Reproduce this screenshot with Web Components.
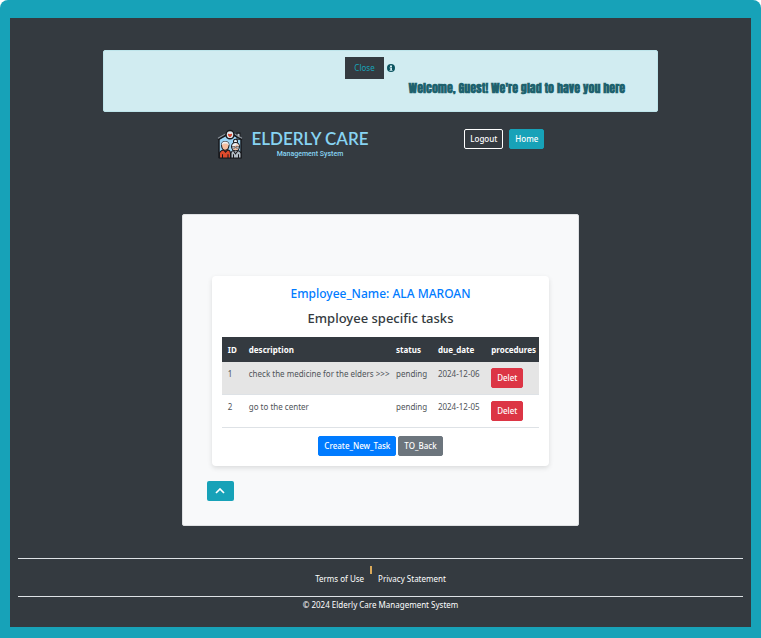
<!DOCTYPE html>
<html lang="en">
<head>
<meta charset="utf-8">
<meta name="viewport" content="width=device-width, initial-scale=1">
<title>Elderly Care Management System</title>
<style>
html { background: #fff; min-height: 100%; }
body { margin: 0; font: 8px/12px "Noto Sans", "Open Sans", sans-serif; color: #343a40; }
</style>
</head>
<body>
<care-page>
  <welcome-alert slot="alert">Welcome, Guest! We're glad to have you here</welcome-alert>
  <site-header slot="header"></site-header>
  <content-panel>
    <task-card employee="ALA MAROAN"></task-card>
  </content-panel>
  <site-footer slot="footer"></site-footer>
</care-page>
<script>
function define(name, html) {
  const template = document.createElement('template');
  template.innerHTML = html;
  customElements.define(name, class extends HTMLElement {
    constructor() {
      super();
      this.attachShadow({ mode: 'open' }).append(template.content.cloneNode(true));
    }
    connectedCallback() {
      if (this.setup) return;
      this.setup = true;
      for (const attr of this.attributes) {
        const target = this.shadowRoot.querySelector('[data-text="' + attr.name + '"]');
        if (target) target.textContent = attr.value;
      }
    }
  });
}

define('care-page', `
<style>
:host { display: flex; box-sizing: border-box; min-height: 100vh; padding: 18px 10px 11px; background: #17a2b8; border-radius: 8px 8px 0 0; }
.sheet { flex: 1; min-width: 0; display: flex; flex-direction: column; align-items: stretch; background: #343a40; padding: 32px 8px 0; }
.alert { margin: 0 11.7%; }
.header { margin: 17px 27.4% 0 27.5%; }
main { margin: 55px 22.6% 32px; }
</style>
<div class="sheet">
  <div class="alert"><slot name="alert"></slot></div>
  <div class="header"><slot name="header"></slot></div>
  <main><slot></slot></main>
  <slot name="footer"></slot>
</div>`);

define('ui-button', `
<style>
:host { display: inline-block; }
button { display: block; box-sizing: border-box; height: 20px; padding: 0 5px; font: inherit; font-weight: 500; white-space: nowrap; color: #fff; background: var(--fill); border: 1px solid var(--edge, var(--fill)); border-radius: 2px; cursor: pointer; }
</style>
<button type="button"><slot></slot></button>`);

define('welcome-alert', `
<style>
:host { display: block; box-sizing: border-box; height: 62px; padding: 6px 32px; background: #d1ecf1; border: 1px solid #bee5eb; border-radius: 2px; color: #0c5460; }
.top { display: flex; justify-content: center; align-items: center; gap: 3px; padding-right: 21px; }
button { box-sizing: border-box; height: 22px; padding: 0 9px; border: 0; font: inherit; color: #17a2b8; background: #343a40; }
svg { display: block; width: 8px; height: 8px; }
p { margin: 0; font: bold 12px/18px Impact, Anton, "Liberation Sans Narrow", "Liberation Sans", sans-serif; text-align: right; white-space: nowrap; opacity: .9; }
</style>
<div class="top"><button type="button">Close</button>
<svg viewBox="0 0 16 16" aria-hidden="true"><circle cx="8" cy="8" r="8" fill="#0c5460"/><path d="M6 3h4v3H6zM5 7h5v5h1v1.500H5V12h1.500V8.500H5z" fill="#d1ecf1"/></svg></div>
<p><slot></slot></p>`);

define('site-header', `
<style>
:host { display: flex; justify-content: space-between; align-items: flex-start; gap: 12px; }
.brand { display: flex; align-items: center; gap: 8px; color: #87d3f2; text-align: center; white-space: nowrap; }
svg { width: 26px; height: 30px; flex: none; }
strong { display: block; font: 600 17px/20px Lato, sans-serif; }
small { display: block; font: 500 7px/10px Roboto, sans-serif; }
nav { display: flex; gap: 6px; }
</style>
<div class="brand">
<svg viewBox="0 0 52 58" preserveAspectRatio="none" aria-hidden="true">
<path d="M4 20 26 8l22 12v35H4z" fill="#9bd4f5"/>
<path d="M40 8h6v12h-6z" fill="#c7ccd2" stroke="#17181c" stroke-width="2"/>
<path d="M2 21 26 8l24 13M4 20v35h44V20" fill="none" stroke="#17181c" stroke-width="3"/>
<path d="M2 18 18 9M34 9l16 9" stroke="#8d959c" stroke-width="2"/>
<circle cx="26" cy="11" r="8" fill="#dfe6ea" stroke="#17181c" stroke-width="3"/>
<path d="M26 16c-7-5-4-9 0-6 4-3 7 1 0 6z" fill="#d6422b"/>
<path d="M5 56V46q2-5 9-6h7q6 1 6 7v9z" fill="#df4a2c" stroke="#17181c" stroke-width="2"/>
<path d="m13 40 4 5 5-5M11 49v7M22 49v7" fill="none" stroke="#17181c" stroke-width="2"/>
<path d="M9 32q0-8 7-8 8 0 8 8-1 9-8 9-6 0-7-9z" fill="#f4bfa1" stroke="#17181c" stroke-width="2"/>
<path d="M9 32q0-8 7-8 8 0 8 8l-4-4h-7z" fill="#eef2f5"/>
<path d="M28 56V46q2-5 7-5h5q7 1 8 6v9z" fill="#b3bcc5" stroke="#17181c" stroke-width="2"/>
<path d="m33 42 4 6 5-6M33 49v7M43 49v7" fill="none" stroke="#17181c" stroke-width="2"/>
<circle cx="37" cy="24" r="4" fill="#edf1f5" stroke="#17181c" stroke-width="2"/>
<circle cx="37" cy="34" r="8" fill="#edf1f5" stroke="#17181c" stroke-width="2"/>
<path d="M31 34q7-1 9-5l4 5q-1 7-7 7-5 0-6-7z" fill="#f4bfa1"/>
<path d="M30 34h6v3h-6zM38 34h6v3h-6z" fill="#dce7ef" stroke="#17181c"/>
</svg>
<div><strong>ELDERLY CARE</strong><small>Management System</small></div>
</div>
<nav><ui-button style="--fill:#343a40;--edge:#fff">Logout</ui-button><ui-button style="--fill:#17a2b8">Home</ui-button></nav>`);

define('content-panel', `
<style>
:host { display: block; background: #f8f9fa; border: 1px solid #dfe1e3; border-radius: 2px; padding: 61px 29px 24px; }
button { display: flex; align-items: center; justify-content: center; width: 27px; height: 20px; margin: 15px 0 0 -5px; padding: 0; border: 0; border-radius: 2px; background: #17a2b8; cursor: pointer; }
</style>
<slot></slot>
<button type="button" aria-label="Back to top"><svg width="10" height="6" viewBox="0 0 10 6" aria-hidden="true"><path d="m1 5 4-4 4 4" fill="none" stroke="#fff" stroke-width="1.700"/></svg></button>`);

define('task-card', `
<style>
:host { display: block; background: #fff; border-radius: 4px; padding: 8px 10px 10px; box-shadow: 0 2px 5px rgba(0,0,0,.12); text-align: center; }
h2, h1 { margin: 0; font-weight: 500; white-space: nowrap; }
h2 { font-size: 12px; line-height: 20px; color: #007bff; }
h1 { margin: 4px 0 9px; font-size: 13px; line-height: 20px; color: #343a40; }
table { width: 100%; table-layout: fixed; border-collapse: separate; border-spacing: 0; text-align: left; }
th, td { box-sizing: border-box; padding: 6px 0 0 6px; vertical-align: top; white-space: nowrap; }
th { height: 25px; padding-top: 7px; color: #fff; background: #343a40; font-weight: 700; }
td { height: 33px; border-bottom: 1px solid #dee2e6; color: #4f5459; }
tbody tr:first-child { background: #e5e5e5; }
.id { width: 6.6%; } .desc { width: 46.4%; } .status { width: 13.2%; } .due { width: 16.8%; }
.actions { display: flex; justify-content: center; gap: 2px; margin-top: 8px; }
</style>
<h2>Employee_Name: <span data-text="employee"></span></h2>
<h1>Employee specific tasks</h1>
<table>
<thead><tr><th class="id">ID</th><th class="desc">description</th><th class="status">status</th><th class="due">due_date</th><th>procedures</th></tr></thead>
<tbody>
<tr><td>1</td><td>check the medicine for the elders &gt;&gt;&gt;</td><td>pending</td><td>2024-12-06</td><td><ui-button style="--fill:#dc3545">Delet</ui-button></td></tr>
<tr><td>2</td><td>go to the center</td><td>pending</td><td>2024-12-05</td><td><ui-button style="--fill:#dc3545">Delet</ui-button></td></tr>
</tbody>
</table>
<div class="actions"><ui-button style="--fill:#007bff">Create_New_Task</ui-button><ui-button style="--fill:#6c757d">TO_Back</ui-button></div>`);

define('site-footer', `
<style>
:host { display: block; color: #fff; text-align: center; }
.links { display: flex; justify-content: center; height: 37px; border-top: 1px solid #dee2e6; }
a { color: inherit; text-decoration: none; padding-top: 14px; }
i { width: 2px; height: 8px; margin: 7px 6px 0; background: #d9a95a; }
p { margin: 0; padding: 2px 0 16px; border-top: 1px solid #dee2e6; }
</style>
<div class="links"><a href="#terms">Terms of Use</a><i></i><a href="#privacy">Privacy Statement</a></div>
<p>© 2024 Elderly Care Management System</p>`);
</script>
</body>
</html>
